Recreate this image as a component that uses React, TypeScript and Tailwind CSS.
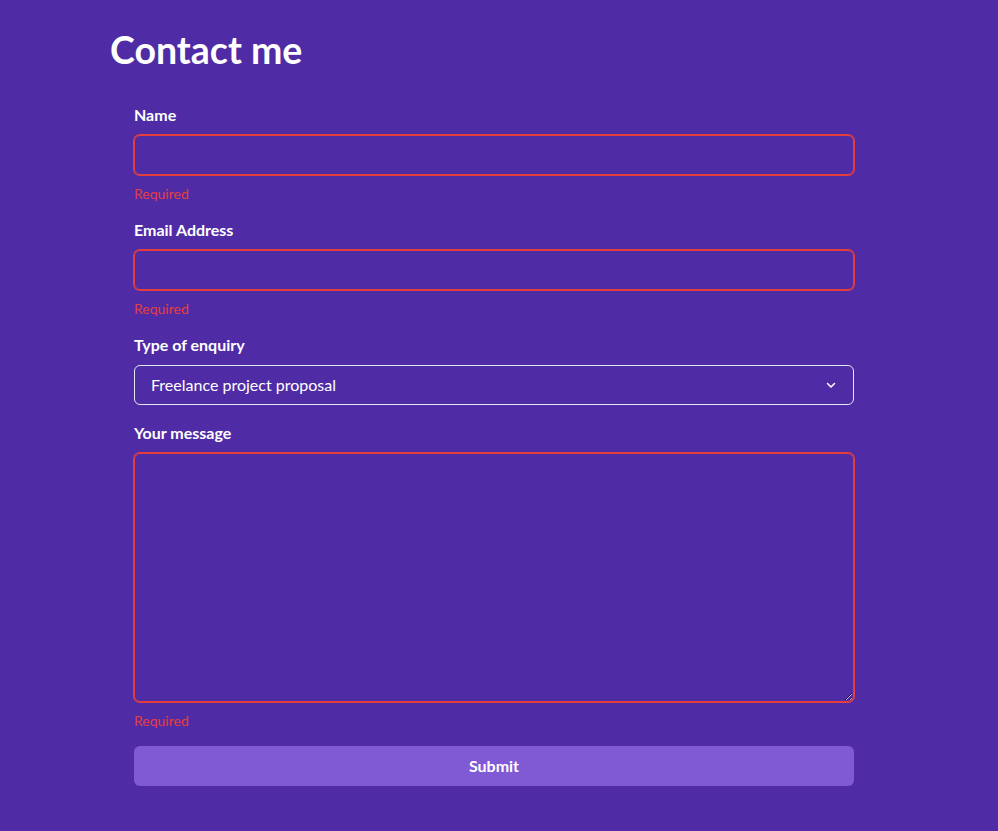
import React from 'react';

const fieldClass =
  'w-full h-10 rounded-md bg-transparent border border-[#e53e3e] shadow-[0_0_0_1px_#e53e3e] px-4 text-white outline-none';

export default function App() {
  return (
    <div className="min-h-[831px] w-full bg-[#4f2ca5] text-white font-['Lato',sans-serif]">
      <div className="px-[110px] pt-[26px]">
        <h1 className="text-[37.5px] leading-[48px] font-bold">Contact me</h1>

        <form className="mt-[29px] ml-6 w-[720px] flex flex-col" onSubmit={(e) => e.preventDefault()}>
          {/* Name */}
          <label className="text-[16px] leading-6 font-bold mb-2">Name</label>
          <input className={fieldClass} />
          <p className="mt-2 text-[14px] leading-[21px] text-[#e53e3e]">Required</p>

          {/* Email */}
          <label className="mt-[14px] text-[16px] leading-6 font-bold mb-2">Email Address</label>
          <input className={fieldClass} />
          <p className="mt-2 text-[14px] leading-[21px] text-[#e53e3e]">Required</p>

          {/* Enquiry type */}
          <label className="mt-[14px] text-[16px] leading-6 font-bold mb-2">Type of enquiry</label>
          <div className="relative">
            <select className="w-full h-10 rounded-md bg-transparent border border-[#e2e8f0] pl-4 pr-8 text-[16px] text-white appearance-none outline-none">
              <option className="text-black">Freelance project proposal</option>
            </select>
            <svg
              className="absolute right-[17px] top-1/2 -translate-y-1/2 pointer-events-none"
              width="12"
              height="12"
              viewBox="0 0 24 24"
              fill="none"
              stroke="white"
              strokeWidth="3"
              strokeLinecap="round"
              strokeLinejoin="round"
            >
              <path d="M5 9l7 7 7-7" />
            </svg>
          </div>

          {/* Message */}
          <label className="mt-4 text-[16px] leading-6 font-bold mb-2">Your message</label>
          <textarea className="w-full h-[249px] rounded-md bg-transparent border border-[#e53e3e] shadow-[0_0_0_1px_#e53e3e] px-4 py-2 text-white outline-none" />
          <p className="mt-2 text-[14px] leading-[21px] text-[#e53e3e]">Required</p>

          <button
            type="submit"
            className="mt-[15px] h-10 w-full rounded-md bg-[#805ad5] text-[16px] font-bold text-white"
          >
            Submit
          </button>
        </form>
      </div>
    </div>
  );
}
